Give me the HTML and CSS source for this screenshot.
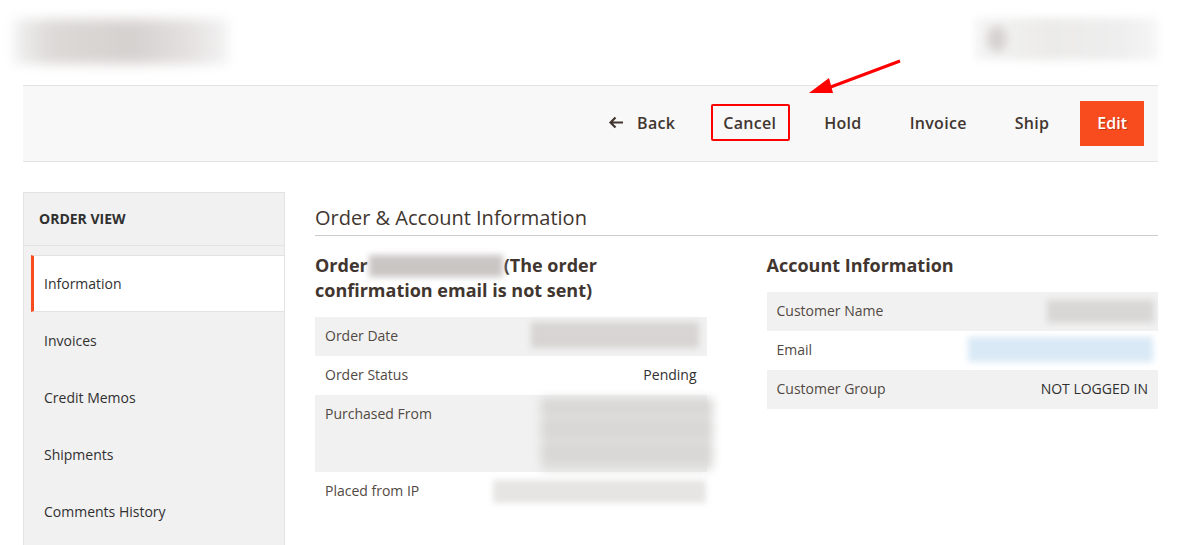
FILE: index.html
```html
<!DOCTYPE html>
<html lang="en">
<head>
<meta charset="utf-8">
<title>Order View</title>
<link rel="stylesheet" href="styles.css">
</head>
<body>
<header class="page-header">
  <div class="blur-logo"></div>
  <div class="blur-user"><span class="blur-avatar"></span></div>
</header>

<div class="toolbar-wrap">
  <div class="toolbar">
    <button class="btn btn-back">
      <svg width="16" height="13" viewBox="0 0 16 13" aria-hidden="true"><path d="M15 6.5H2.5M7.5 1.5L2.5 6.5l5 5" fill="none" stroke="#41362f" stroke-width="2.2"/></svg>
      Back
    </button>
    <button class="btn btn-cancel">Cancel</button>
    <button class="btn">Hold</button>
    <button class="btn">Invoice</button>
    <button class="btn">Ship</button>
    <button class="btn btn-primary">Edit</button>
  </div>
  <svg class="annot-arrow" width="110" height="50" viewBox="0 0 110 50" aria-hidden="true">
    <line x1="100" y1="6" x2="28" y2="33" stroke="#ff0000" stroke-width="3"/>
    <polygon points="9,38 29,23 33,38" fill="#ff0000"/>
  </svg>
</div>

<div class="page-main">
  <aside class="sidebar">
    <div class="sidebar-title">Order View</div>
    <ul class="tabs">
      <li class="tab active">Information</li>
      <li class="tab">Invoices</li>
      <li class="tab">Credit Memos</li>
      <li class="tab">Shipments</li>
      <li class="tab">Comments History</li>
    </ul>
  </aside>

  <main class="content">
    <h2 class="section-title">Order &amp; Account Information</h2>
    <div class="columns">
      <section class="col">
        <h3 class="col-title"><span>Order</span><span class="blur-inline"></span><span>(The order</span><br><span>confirmation email is not sent)</span></h3>
        <table class="info">
          <tr class="alt"><th>Order Date</th><td><span class="blur blur-date"></span></td></tr>
          <tr><th>Order Status</th><td>Pending</td></tr>
          <tr class="alt"><th>Purchased From</th><td><span class="blur blur-store"></span></td></tr>
          <tr><th>Placed from IP</th><td><span class="blur blur-ip"></span></td></tr>
        </table>
      </section>
      <section class="col">
        <h3 class="col-title">Account Information</h3>
        <table class="info">
          <tr class="alt"><th>Customer Name</th><td><span class="blur blur-name"></span></td></tr>
          <tr><th>Email</th><td><span class="blur blur-email"></span></td></tr>
          <tr class="alt"><th>Customer Group</th><td>NOT LOGGED IN</td></tr>
        </table>
      </section>
    </div>
  </main>
</div>
</body>
</html>
```

FILE: styles.css
```css
html, body {
  margin: 0;
  padding: 0;
  background: #ffffff;
  overflow: hidden;
}
body {
  font-family: "Open Sans", "Noto Sans", sans-serif;
  color: #303030;
  font-size: 14px;
}

/* header */
.page-header {
  height: 85px;
  box-sizing: border-box;
  display: flex;
  justify-content: space-between;
  align-items: flex-start;
  padding: 19px 22px 0 14px;
}
.blur-logo {
  width: 214px;
  height: 45px;
  background: linear-gradient(90deg, #f1f1f1 0%, #dcd9d7 18%, #d5d1cf 55%, #e4e1e0 82%, #f3f3f3 100%);
  filter: blur(6px);
}
.blur-user {
  width: 183px;
  height: 42px;
  margin-top: -1px;
  display: flex;
  align-items: center;
  background: linear-gradient(90deg, #f4f4f4 0%, #ecebea 40%, #eeeeee 80%, #f6f6f6 100%);
  filter: blur(4px);
}
.blur-avatar {
  width: 20px;
  height: 26px;
  margin-left: 12px;
  border-radius: 50%;
  background: #d6d2d0;
}

/* toolbar */
.toolbar-wrap {
  position: relative;
  margin: 0 22px 0 23px;
}
.toolbar {
  height: 75px;
  background: #f8f8f8;
  border-top: 1px solid #e3e3e3;
  border-bottom: 1px solid #e3e3e3;
  display: flex;
  justify-content: flex-end;
  align-items: center;
  padding-right: 14px;
}
.btn {
  position: relative;
  height: 45px;
  box-sizing: border-box;
  margin-left: 14px;
  padding: 0 17px 2px;
  border: 0;
  background: transparent;
  font-family: "Open Sans", "Noto Sans", sans-serif;
  font-size: 16px;
  font-weight: 600;
  letter-spacing: 0.3px;
  color: #41362f;
  display: inline-flex;
  align-items: center;
  gap: 13px;
}
.btn-cancel::after {
  content: "";
  position: absolute;
  left: 5px;
  right: 3px;
  top: 3px;
  bottom: 5px;
  border: 2px solid #ff0000;
  border-radius: 2px;
}
.btn-primary {
  background: #f84b1e;
  color: #ffffff;
  letter-spacing: 0;
  text-shadow: 1px 1px 0 rgba(0,0,0,0.25);
}
.annot-arrow {
  position: absolute;
  left: 777px;
  top: -30px;
}

/* main */
.page-main {
  display: flex;
  gap: 30px;
  margin: 30px 22px 0 23px;
}
.sidebar {
  width: 262px;
  flex: none;
  box-sizing: border-box;
  min-height: 353px;
  background: #f1f1f1;
  border: 1px solid #e3e3e3;
  border-bottom: 0;
}
.sidebar-title {
  height: 53px;
  box-sizing: border-box;
  padding: 0 15px 1px;
  display: flex;
  align-items: center;
  font-weight: 700;
  font-size: 14px;
  text-transform: uppercase;
  color: #303030;
  border-bottom: 1px solid #e3e3e3;
}
.tabs {
  list-style: none;
  margin: 9px 0 0 7px;
  padding: 0;
}
.tab {
  height: 57px;
  box-sizing: border-box;
  display: flex;
  align-items: center;
  padding-left: 10px;
  border-left: 3px solid transparent;
  border-top: 1px solid transparent;
  border-bottom: 1px solid transparent;
  color: #303030;
  font-size: 14px;
}
.tab.active {
  background: #ffffff;
  border-left-color: #f84b1e;
  border-top-color: #e3e3e3;
  border-bottom-color: #e3e3e3;
}

.content {
  flex: 1;
}
.section-title {
  margin: 0;
  padding: 12px 0 3px;
  font-size: 20px;
  line-height: 28px;
  font-weight: 400;
  color: #41362f;
  border-bottom: 1px solid #cccccc;
}
.columns {
  display: grid;
  grid-template-columns: 1fr 1fr;
  column-gap: 60px;
  padding-top: 17px;
}
.col-title {
  margin: 0 0 14px;
  font-size: 18px;
  line-height: 25px;
  font-weight: 700;
  color: #41362f;
}
.blur-inline {
  display: inline-block;
  width: 134px;
  height: 22px;
  margin: 0 1px 0 1px;
  vertical-align: -5px;
  background: #cac6c4;
  filter: blur(3px);
}
.info {
  width: 100%;
  border-collapse: collapse;
}
.info th, .info td {
  padding: 9px 10px 10px;
  line-height: 20px;
  font-size: 14px;
  vertical-align: top;
}
.info th {
  text-align: left;
  font-weight: 400;
  color: #514943;
}
.info td {
  text-align: right;
  color: #303030;
}
.info tr.alt {
  background: #f1f1f1;
}
.blur {
  display: inline-block;
  vertical-align: top;
  filter: blur(3px);
}
.blur-date {
  width: 168px;
  height: 26px;
  margin: -4px -2px -2px 0;
  background: #d7d4d3;
}
.blur-store {
  width: 172px;
  height: 72px;
  margin: -6px -16px -8px 0;
  background: repeating-linear-gradient(180deg, #d8d7d6 0px, #d8d7d6 14px, #e2e1e0 19px, #d8d7d6 24px);
  filter: blur(5px);
}
.blur-ip {
  width: 213px;
  height: 23px;
  margin: -1px -9px -2px 0;
  background: #e6e5e4;
}
.blur-name {
  width: 107px;
  height: 23px;
  margin: -1px -6px -2px 0;
  background: #d9d7d6;
}
.blur-email {
  width: 185px;
  height: 25px;
  margin: -3px -5px -2px 0;
  background: #d9e9f6;
}
```
